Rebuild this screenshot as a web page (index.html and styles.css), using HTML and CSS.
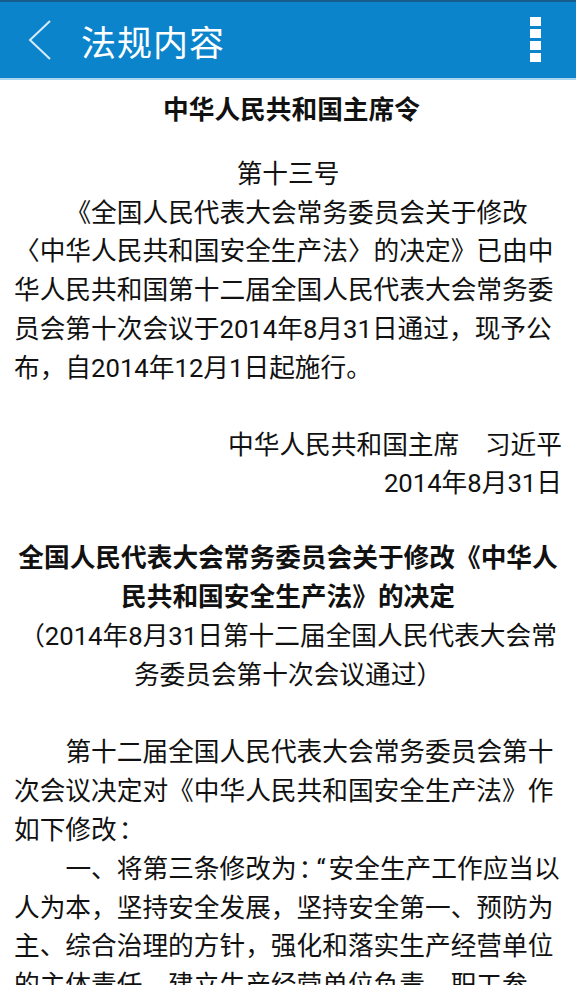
FILE: index.html
```html
<!DOCTYPE html>
<html lang="zh-CN">
<head>
    <meta charset="UTF-8">
    <meta name="viewport" content="width=device-width, initial-scale=1.0">
    <title>法规内容</title>
    <link rel="stylesheet" href="styles.css">
</head>
<body>
    <div class="topbar">
        <div class="back">
            <svg width="30" height="42" viewBox="0 0 30 42">
                <polyline points="24,2 4,21 24,40" fill="none" stroke="#d6ebf8" stroke-width="2"/>
            </svg>
        </div>
        <h1>法规内容</h1>
        <div class="menu">
            <span></span><span></span><span></span><span></span>
        </div>
    </div>

    <div class="content">
        <h2 class="order-title">中华人民共和国主席令</h2>

        <p class="center">第十三号</p>
        <p class="indent">《全国人民代表大会常务委员会关于修改〈中华人民共和国安全生产法〉的决定》已由中华人民共和国第十二届全国人民代表大会常务委员会第十次会议于2014年8月31日通过，现予公布，自2014年12月1日起施行。</p>

        <div class="sign">
            <p>中华人民共和国主席　习近平</p>
            <p>2014年8月31日</p>
        </div>

        <h2 class="decision">全国人民代表大会常务委员会关于修改《中华人民共和国安全生产法》的决定</h2>
        <p class="center">（2014年8月31日第十二届全国人民代表大会常务委员会第十次会议通过）</p>

        <p class="indent gap">第十二届全国人民代表大会常务委员会第十次会议决定对《中华人民共和国安全生产法》作如下修改<span class="halt">：</span></p>
        <p class="indent">一、将第三条修改为<span class="halt">：</span><span class="quote">“</span>安全生产工作应当以人为本，坚持安全发展，坚持安全第一、预防为主、综合治理的方针，强化和落实生产经营单位的主体责任，建立生产经营单位负责、职工参与、政府监管、行业自律和社会监督的机制。”</p>
    </div>
</body>
</html>
```

FILE: styles.css
```css
body {
    margin: 0;
    background: #fff;
    font-family: Roboto, "Noto Sans CJK SC", sans-serif;
    color: #111;
    overflow: hidden;
}

/* 顶部标题栏 */
.topbar {
    height: 76px;
    background: #0b84cc;
    border-top: 2px solid #175d8e;
    border-bottom: 2px solid #a9d7f1;
    display: flex;
    align-items: center;
}

.back {
    width: 30px;
    height: 42px;
    margin-left: 26px;
    margin-right: 25px;
}

.back svg {
    display: block;
}

.topbar h1 {
    margin: 0;
    flex: 1;
    color: #fff;
    font-size: 35px;
    font-weight: normal;
    letter-spacing: 1px;
}

.menu {
    display: flex;
    flex-direction: column;
    gap: 3px;
    margin-right: 35px;
    margin-top: -2px;
}

.menu span {
    display: block;
    width: 11px;
    height: 9px;
    background: #fff;
}

/* 正文 */
.content {
    padding: 11px 14px 0;
    font-size: 25.7px;
    line-height: 38.8px;
}

.content p {
    margin: 0;
}

.content h2 {
    margin: 0;
    font-size: 25.7px;
    font-weight: bold;
    text-align: center;
}

.order-title {
    padding-left: 7px;
    margin-bottom: 25px !important;
}

.center {
    text-align: center;
}

.indent {
    text-indent: 2em;
}

/* 半角冒号 */
.halt {
    font-feature-settings: "halt";
    padding-left: 2px;
}

.quote {
    padding: 0 3px 0 5px;
}

.sign {
    text-align: right;
    margin-top: 38px;
    margin-bottom: 36px;
}

.gap {
    margin-top: 39px !important;
}
```
